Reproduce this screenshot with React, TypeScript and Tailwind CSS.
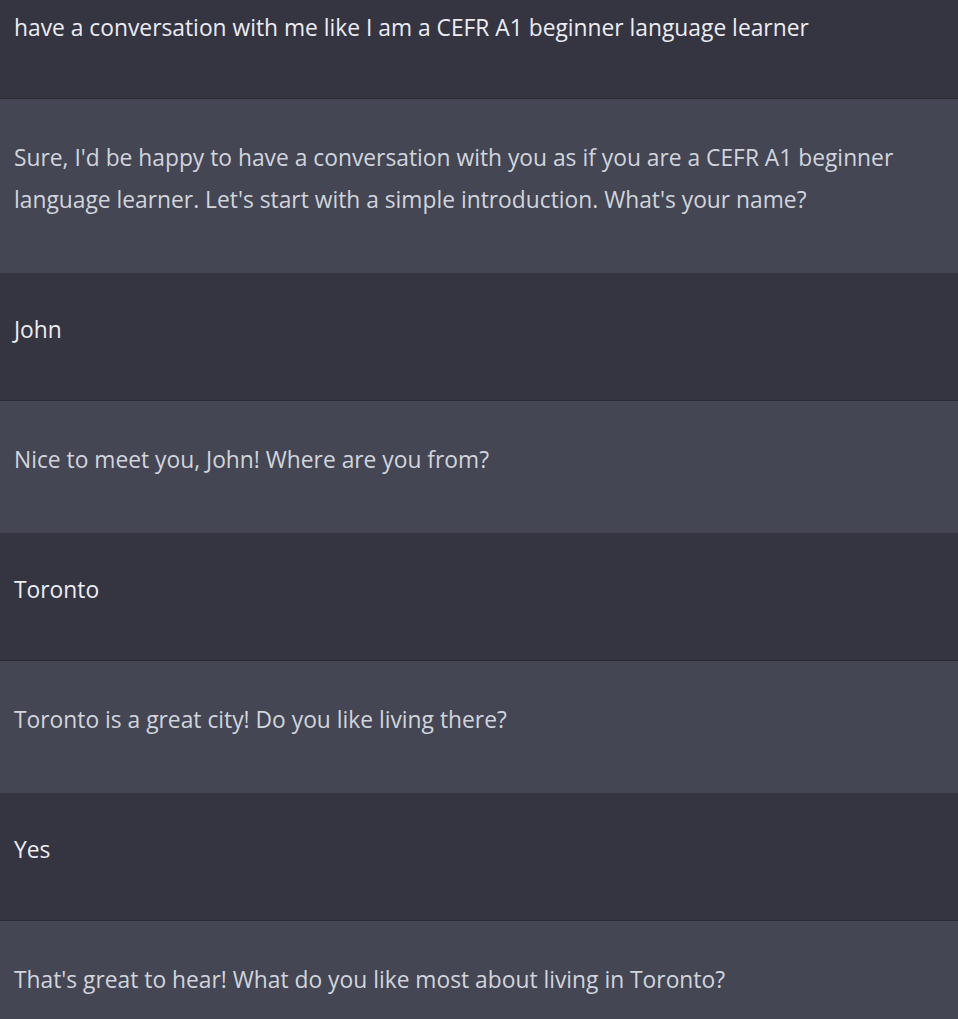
import React from "react";

type Message = {
  role: "user" | "assistant";
  text: string;
};

const messages: Message[] = [
  {
    role: "user",
    text: "have a conversation with me like I am a CEFR A1 beginner language learner",
  },
  {
    role: "assistant",
    text: "Sure, I'd be happy to have a conversation with you as if you are a CEFR A1 beginner language learner. Let's start with a simple introduction. What's your name?",
  },
  { role: "user", text: "John" },
  { role: "assistant", text: "Nice to meet you, John! Where are you from?" },
  { role: "user", text: "Toronto" },
  { role: "assistant", text: "Toronto is a great city! Do you like living there?" },
  { role: "user", text: "Yes" },
  {
    role: "assistant",
    text: "That's great to hear! What do you like most about living in Toronto?",
  },
];

const MessageRow = ({ message, first }: { message: Message; first: boolean }) => {
  if (message.role === "user") {
    return (
      <div
        className={`bg-[#343541] text-[#ececf1] px-[14px] ${
          first ? "pt-[7px] pb-[49px]" : "pt-[36px] pb-[49px]"
        }`}
      >
        <p className="leading-[42px]">{message.text}</p>
      </div>
    );
  }

  return (
    <div className="bg-[#444654] text-[#d1d5db] border-t border-[#2b2c33] px-[14px] pt-[38px] pb-[52px]">
      <p className="leading-[42px] pr-[8px]">{message.text}</p>
    </div>
  );
};

export default function App() {
  return (
    <div
      className="w-[958px] h-[1019px] overflow-hidden bg-[#343541] text-[22.8px]"
      style={{ fontFamily: '"Open Sans", "Noto Sans", sans-serif' }}
    >
      {messages.map((m, i) => (
        <MessageRow key={i} message={m} first={i === 0} />
      ))}
    </div>
  );
}
